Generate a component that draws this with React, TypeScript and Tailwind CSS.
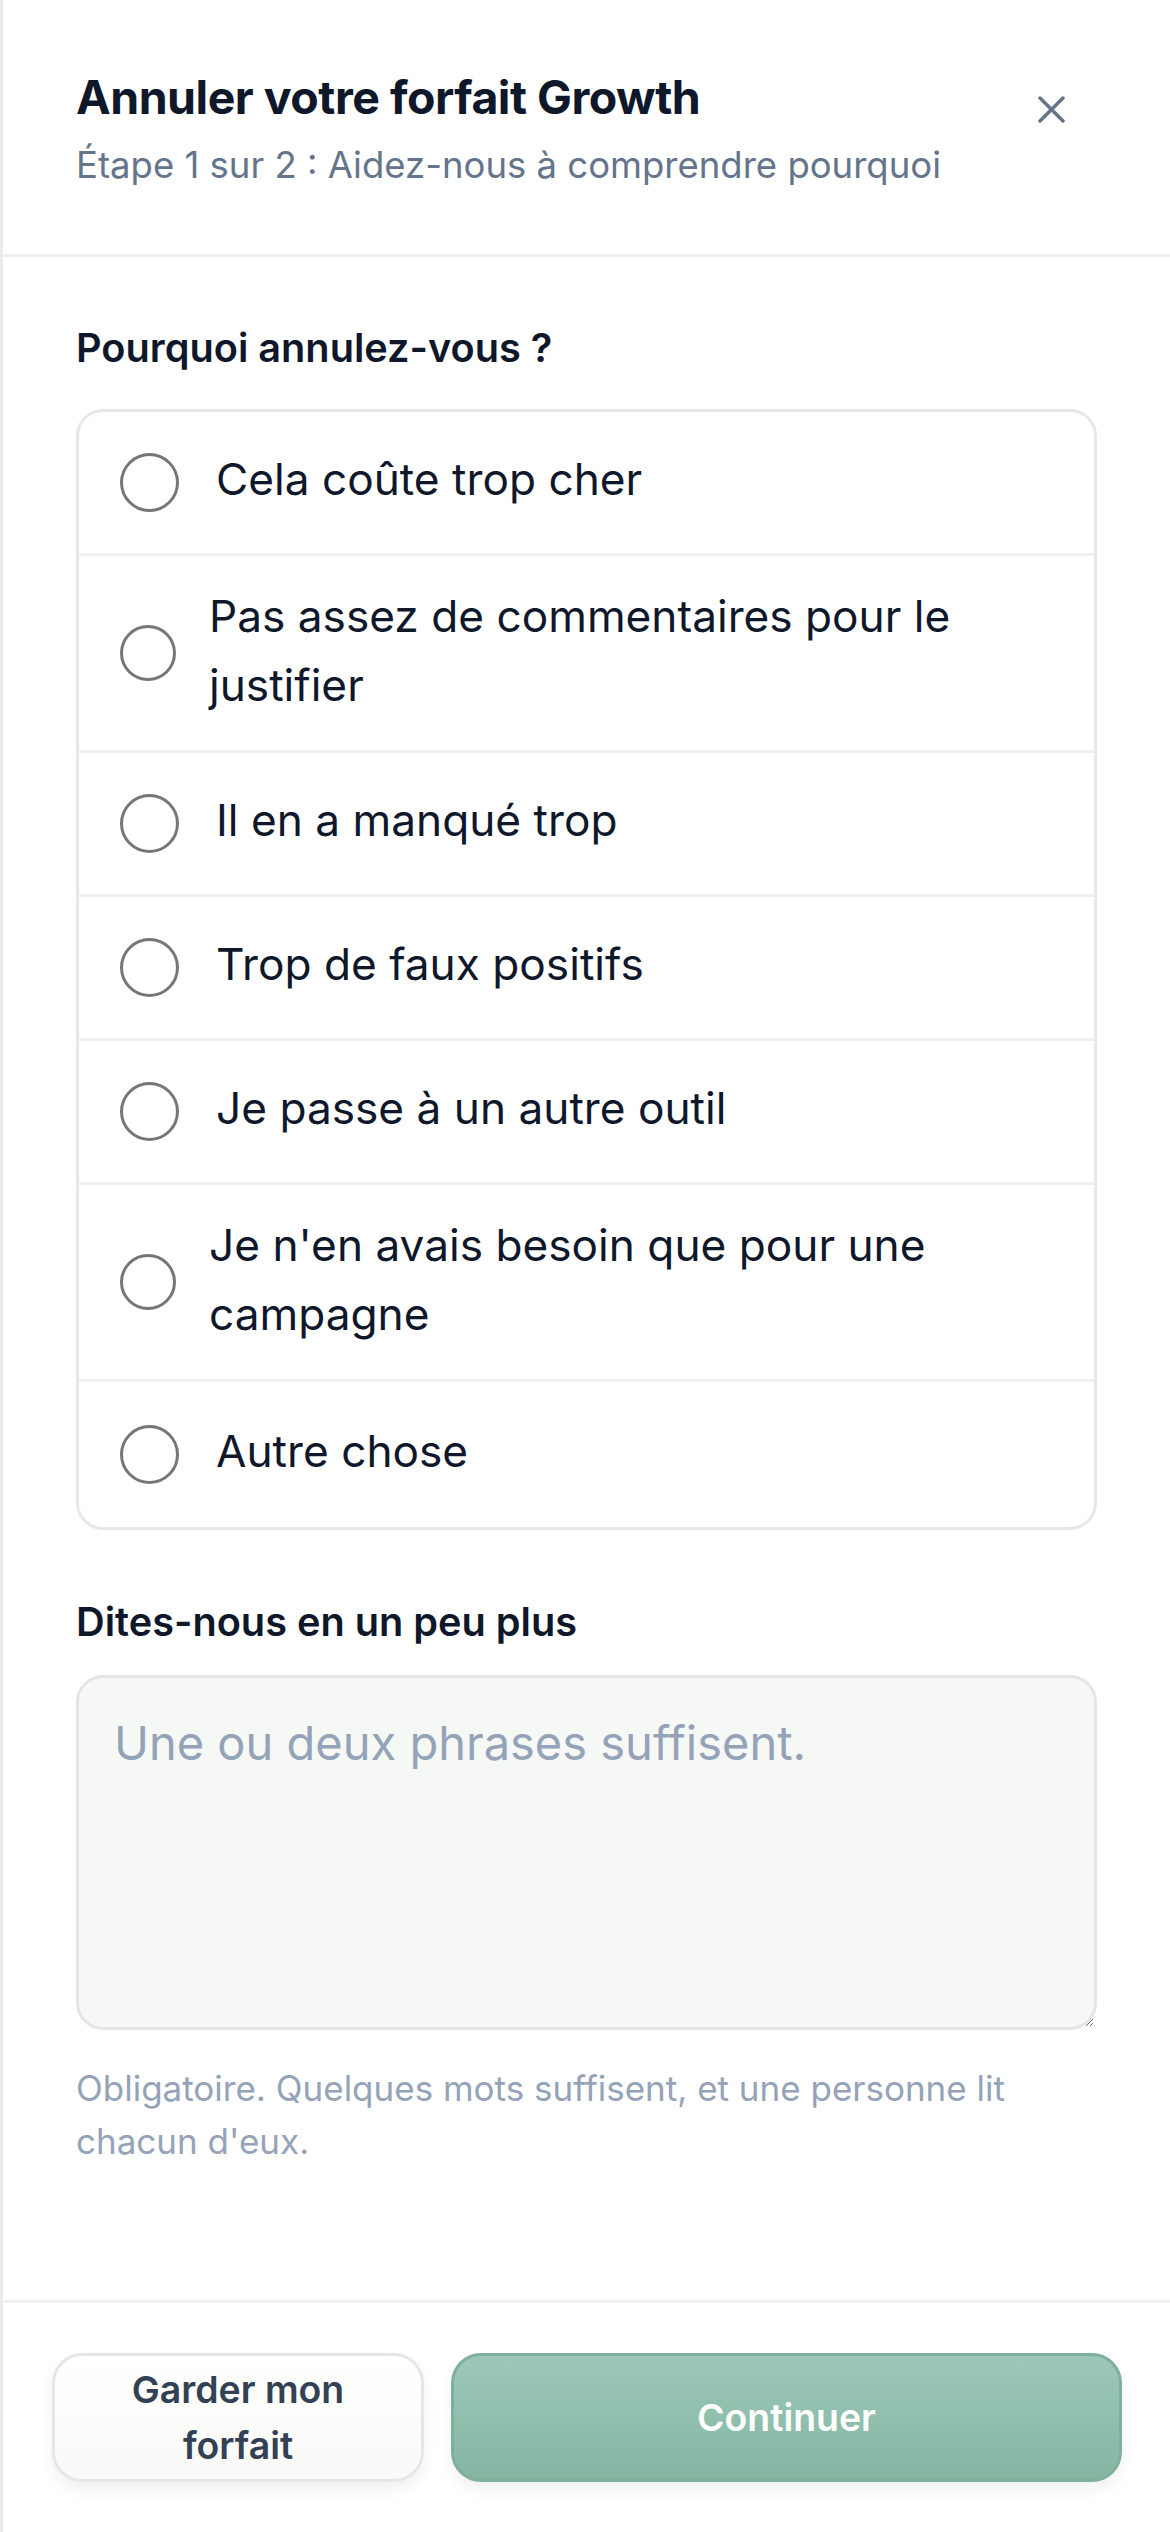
const reasons = [
  { label: "Cela coûte trop cher", long: false },
  { label: "Pas assez de commentaires pour le justifier", long: true },
  { label: "Il en a manqué trop", long: false },
  { label: "Trop de faux positifs", long: false },
  { label: "Je passe à un autre outil", long: false },
  { label: "Je n'en avais besoin que pour une campagne", long: true },
  { label: "Autre chose", long: false },
];

function Radio({ small }: { small: boolean }) {
  return (
    <span
      className={
        small
          ? "block h-[56px] w-[56px] shrink-0 rounded-full border-[3px] border-[#767676] bg-white"
          : "block h-[59px] w-[59px] shrink-0 rounded-full border-[3px] border-[#767676] bg-white"
      }
    />
  );
}

export default function App() {
  return (
    <div className="flex min-h-[2532px] w-full flex-col border-l-[3px] border-[#ebebeb] bg-white font-['Inter',_sans-serif]">
      <header className="flex items-start justify-between border-b-[3px] border-[#f0f0f0] pl-[73px] pr-[73px] pt-[68px] pb-[65px]">
        <div>
          <h1 className="text-[46.5px] font-bold leading-[58px] tracking-[-0.5px] text-[#0f172a]">
            Annuler votre forfait Growth
          </h1>
          <p className="mt-[15px] text-[36.5px] leading-[48px] text-[#64748b]">
            Étape 1 sur 2 : Aidez-nous à comprendre pourquoi
          </p>
        </div>
        <button className="-mt-[4px] p-[32px] text-[#64748b]" aria-label="Fermer">
          <svg width="27" height="27" viewBox="0 0 27 27" fill="none">
            <path d="M2 2L25 25M25 2L2 25" stroke="currentColor" strokeWidth="3.5" strokeLinecap="round" />
          </svg>
        </button>
      </header>

      <main className="flex flex-1 flex-col px-[73px] pt-[63px]">
        <h2 className="text-[39.7px] font-semibold leading-[56px] text-[#0f172a]">Pourquoi annulez-vous ?</h2>
        <div className="mt-[33px] overflow-hidden rounded-[27px] border-[3px] border-[#e6e7e6]">
          {reasons.map((r, i) => (
            <label
              key={r.label}
              className={
                (i === 0
                  ? "min-h-[141px] "
                  : i === reasons.length - 1
                    ? "min-h-[148px] border-t-[3px] border-[#f0f0f0] "
                    : "min-h-[144px] border-t-[3px] border-[#f0f0f0] ") +
                (r.long ? "py-[30px] " : "py-[28px] ") +
                "flex cursor-pointer items-center pl-[41px] pr-[42px]"
              }
            >
              <Radio small={r.long} />
              <span
                className={
                  (r.long ? "ml-[33px] -mt-[4px] " : "ml-[37px] -mt-[6px] ") +
                  "text-[44.2px] leading-[69px] text-[#0f172a]"
                }
              >
                {r.label}
              </span>
            </label>
          ))}
        </div>

        <h2 className="mt-[64px] text-[39.7px] font-semibold leading-[56px] text-[#0f172a]">
          Dites-nous en un peu plus
        </h2>
        <textarea
          placeholder="Une ou deux phrases suffisent."
          className="mt-[25px] h-[355px] w-full rounded-[27px] border-[3px] border-[#e3e6e3] bg-[#f6f8f6] px-[35px] pt-[36px] text-[47px] leading-[58px] text-[#0f172a] outline-none placeholder:text-[#94a3b8]"
        />
        <p className="mt-[32px] text-[35px] leading-[53px] text-[#94a3b8]">
          Obligatoire. Quelques mots suffisent, et une personne lit chacun d'eux.
        </p>
      </main>

      <footer className="flex gap-[27px] border-t-[3px] border-[#f0f0f0] pl-[49px] pr-[48px] pt-[50px] pb-[50px]">
        <button className="flex h-[129px] w-[372px] shrink-0 items-center justify-center rounded-[30px] border-[3px] border-[#e6e6e4] bg-gradient-to-b from-white to-[#f9f9f7] px-[20px] text-[37.4px] font-semibold leading-[56px] text-[#334155] shadow-[0_8px_16px_rgba(0,0,0,0.06)]">
          Garder mon forfait
        </button>
        <button className="flex h-[129px] flex-1 items-center justify-center rounded-[30px] border-[3px] border-[#7fb09c] bg-gradient-to-b from-[#9dc8b7] to-[#84b6a2] text-[37.4px] font-semibold leading-[56px] text-white shadow-[0_8px_16px_rgba(0,0,0,0.06)]">
          Continuer
        </button>
      </footer>
    </div>
  );
}
